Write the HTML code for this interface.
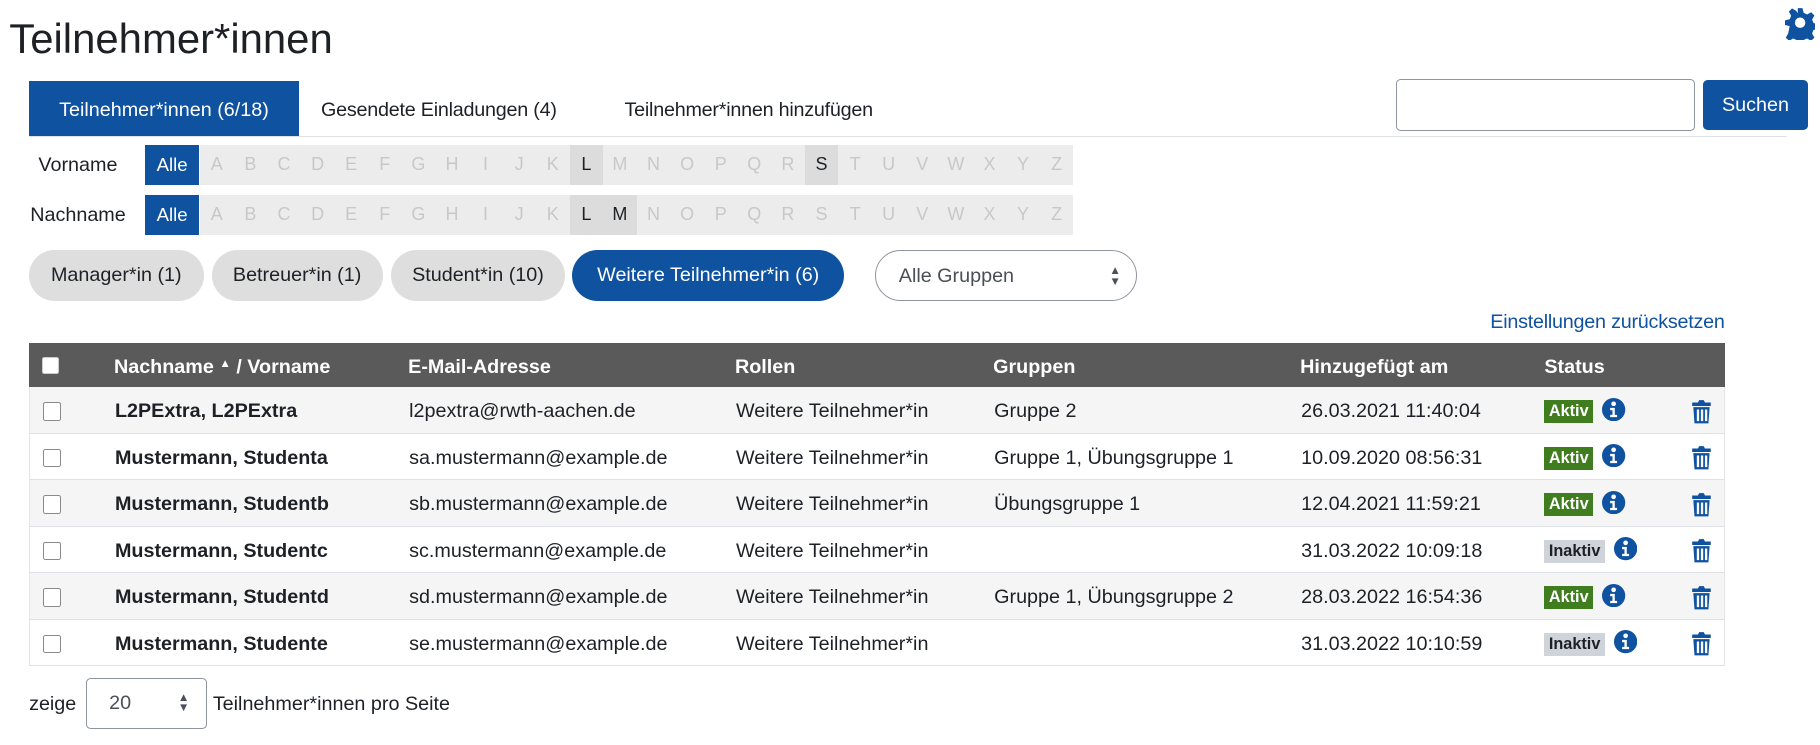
<!DOCTYPE html>
<html><head><meta charset="utf-8"><style>
html,body{margin:0;padding:0;background:#fff;overflow:hidden}
body{width:1820px;height:745px}
#w{zoom:1.16294;position:relative;width:1565px;height:641px;font-family:"Liberation Sans",sans-serif;color:#1d2125;font-size:17px}
.a{position:absolute;white-space:nowrap}
.blue{background:#0f52a0;color:#fff}
.bar{position:absolute;left:172px;width:751px;background:#ececec;display:flex}
.bar span{width:29px;text-align:center;color:#c8c8c8;font-size:15.5px;line-height:34px}
.bar span.on{background:#dcdcdc;color:#1d2125}
.pill{position:absolute;top:215px;height:44px;border-radius:22px;background:#dedede;line-height:44px;font-size:17px;text-align:center}
.pill.blue{background:#0f52a0;color:#fff}
.hdr{position:absolute;left:25px;top:295px;width:1458px;height:38px;background:#5a5a5a;color:#fff;font-weight:bold}
.row{position:absolute;left:25px;width:1458px;height:40px;border-bottom:1px solid #dee2e6;border-left:1px solid #e5e5e5;border-right:1px solid #e5e5e5;box-sizing:border-box}
.row .a,.hdr .a{top:11px}
.cb{position:absolute;left:11px;top:13px;width:14px;height:14px;border:1.5px solid #8a8a8a;border-radius:2px;background:#fff}
.badge{position:absolute;left:1302px;top:11px;height:20px;line-height:20px;padding:0 4px;font-size:14px;font-weight:bold}
.ak{background:#3f7d1f;color:#fff}
.in{background:#ced4da;color:#1d2125}
</style></head><body><div id="w">
<div class="a" style="left:8px;top:13px;font-size:36px;line-height:42px">Teilnehmer*innen</div>
<svg class="a" style="left:1535px;top:6px" width="26" height="28" viewBox="0 0 26 28"><path fill="#0f52a0" d="M11 1h4l1 4 3 1.5 3.5-2 2.8 2.8-2 3.5 1.2 3 4 1v4l-4 1-1.2 3 2 3.5-2.8 2.8-3.5-2-3 1.3-1 4h-4l-1-4-3-1.3-3.5 2-2.8-2.8 2-3.5L4 16.5l-4-1v-4l4-1 1.3-3-2-3.5L6 1.2l3.5 2L11 5.4z"/><circle cx="13" cy="13.5" r="4.5" fill="#fff"/></svg>

<div class="a blue" style="left:25px;top:70px;width:232px;height:47px;line-height:50px;text-align:center">Teilnehmer*innen (6/18)</div>
<div class="a" style="left:276px;top:70px;line-height:50px;letter-spacing:-0.2px">Gesendete Einladungen (4)</div>
<div class="a" style="left:537px;top:70px;line-height:50px;letter-spacing:-0.2px">Teilnehmer*innen hinzufügen</div>
<div class="a" style="left:25px;top:117px;width:1512px;height:1px;background:#dee2e6"></div>
<div class="a" style="left:1200px;top:68px;width:256px;height:43px;border:1px solid #8f959e;border-radius:4px"></div>
<div class="a blue" style="left:1464px;top:69px;width:91px;height:43px;border-radius:4px;line-height:43px;text-align:center">Suchen</div>

<div class="a" style="left:33px;top:125px;line-height:36px">Vorname</div>
<div class="a blue" style="left:125px;top:125px;width:46px;height:34px;line-height:34px;text-align:center;font-size:16px">Alle</div>
<div class="bar" style="top:125px;height:34px"><span>A</span><span>B</span><span>C</span><span>D</span><span>E</span><span>F</span><span>G</span><span>H</span><span>I</span><span>J</span><span>K</span><span class="on">L</span><span>M</span><span>N</span><span>O</span><span>P</span><span>Q</span><span>R</span><span class="on">S</span><span>T</span><span>U</span><span>V</span><span>W</span><span>X</span><span>Y</span><span>Z</span></div>
<div class="a" style="left:26px;top:168px;line-height:36px">Nachname</div>
<div class="a blue" style="left:125px;top:168px;width:46px;height:34px;line-height:34px;text-align:center;font-size:16px">Alle</div>
<div class="bar" style="top:168px;height:34px"><span>A</span><span>B</span><span>C</span><span>D</span><span>E</span><span>F</span><span>G</span><span>H</span><span>I</span><span>J</span><span>K</span><span class="on">L</span><span class="on">M</span><span>N</span><span>O</span><span>P</span><span>Q</span><span>R</span><span>S</span><span>T</span><span>U</span><span>V</span><span>W</span><span>X</span><span>Y</span><span>Z</span></div>

<div class="pill" style="left:25px;width:150px">Manager*in (1)</div>
<div class="pill" style="left:182px;width:147px">Betreuer*in (1)</div>
<div class="pill" style="left:336px;width:150px">Student*in (10)</div>
<div class="pill blue" style="left:492px;width:234px">Weitere Teilnehmer*in (6)</div>
<div class="a" style="left:752px;top:215px;width:224px;height:42px;border:1px solid #8f959e;border-radius:22px;line-height:44px;color:#495057"><span style="margin-left:20px">Alle Gruppen</span><span style="position:absolute;right:13px;font-size:10px;line-height:9px;top:13px">▲<br>▼</span></div>
<div class="a" style="right:82px;top:266px;color:#0f52a0;line-height:24px;letter-spacing:-0.2px">Einstellungen zurücksetzen</div>

<div class="hdr">
<div style="position:absolute;left:11px;top:12px;width:15px;height:15px;background:#fff;border-radius:2px;border:1px solid #ccc;box-sizing:border-box"></div>
<div class="a" style="left:73px">Nachname <span style="font-size:10px;vertical-align:5px">▲</span> / Vorname</div>
<div class="a" style="left:326px">E-Mail-Adresse</div>
<div class="a" style="left:607px">Rollen</div>
<div class="a" style="left:829px">Gruppen</div>
<div class="a" style="left:1093px">Hinzugefügt am</div>
<div class="a" style="left:1303px">Status</div>
</div>

<div class="row" style="top:333px;background:#f5f5f5"><div class="cb"></div><b class="a" style="left:73px">L2PExtra, L2PExtra</b><div class="a" style="left:326px">l2pextra@rwth-aachen.de</div><div class="a" style="left:607px">Weitere Teilnehmer*in</div><div class="a" style="left:829px">Gruppe 2</div><div class="a" style="left:1093px">26.03.2021 11:40:04</div><div class="badge ak">Aktiv</div><svg class="a" style="left:1352px;top:9px" width="20" height="20" viewBox="0 0 20 20"><circle cx="10" cy="10" r="10" fill="#0f52a0"/><circle cx="10" cy="5" r="2" fill="#fff"/><path d="M7 8.5h4v6h2v2H7v-2h2v-4H7z" fill="#fff"/></svg><svg class="a" style="left:1428px;top:10px" width="18" height="22" viewBox="0 0 18 22"><path fill="#0f52a0" d="M1 3h5l1-2h4l1 2h5v3H1zM2 7h14l-1 14H3zm3 2v10h2V9zm3.5 0v10h2V9zM12 9v10h2V9z"/></svg></div>
<div class="row" style="top:373px;background:#fff"><div class="cb"></div><b class="a" style="left:73px">Mustermann, Studenta</b><div class="a" style="left:326px">sa.mustermann@example.de</div><div class="a" style="left:607px">Weitere Teilnehmer*in</div><div class="a" style="left:829px">Gruppe 1, Übungsgruppe 1</div><div class="a" style="left:1093px">10.09.2020 08:56:31</div><div class="badge ak">Aktiv</div><svg class="a" style="left:1352px;top:9px" width="20" height="20" viewBox="0 0 20 20"><circle cx="10" cy="10" r="10" fill="#0f52a0"/><circle cx="10" cy="5" r="2" fill="#fff"/><path d="M7 8.5h4v6h2v2H7v-2h2v-4H7z" fill="#fff"/></svg><svg class="a" style="left:1428px;top:10px" width="18" height="22" viewBox="0 0 18 22"><path fill="#0f52a0" d="M1 3h5l1-2h4l1 2h5v3H1zM2 7h14l-1 14H3zm3 2v10h2V9zm3.5 0v10h2V9zM12 9v10h2V9z"/></svg></div>
<div class="row" style="top:413px;background:#f5f5f5"><div class="cb"></div><b class="a" style="left:73px">Mustermann, Studentb</b><div class="a" style="left:326px">sb.mustermann@example.de</div><div class="a" style="left:607px">Weitere Teilnehmer*in</div><div class="a" style="left:829px">Übungsgruppe 1</div><div class="a" style="left:1093px">12.04.2021 11:59:21</div><div class="badge ak">Aktiv</div><svg class="a" style="left:1352px;top:9px" width="20" height="20" viewBox="0 0 20 20"><circle cx="10" cy="10" r="10" fill="#0f52a0"/><circle cx="10" cy="5" r="2" fill="#fff"/><path d="M7 8.5h4v6h2v2H7v-2h2v-4H7z" fill="#fff"/></svg><svg class="a" style="left:1428px;top:10px" width="18" height="22" viewBox="0 0 18 22"><path fill="#0f52a0" d="M1 3h5l1-2h4l1 2h5v3H1zM2 7h14l-1 14H3zm3 2v10h2V9zm3.5 0v10h2V9zM12 9v10h2V9z"/></svg></div>
<div class="row" style="top:453px;background:#fff"><div class="cb"></div><b class="a" style="left:73px">Mustermann, Studentc</b><div class="a" style="left:326px">sc.mustermann@example.de</div><div class="a" style="left:607px">Weitere Teilnehmer*in</div><div class="a" style="left:1093px">31.03.2022 10:09:18</div><div class="badge in">Inaktiv</div><svg class="a" style="left:1362px;top:9px" width="20" height="20" viewBox="0 0 20 20"><circle cx="10" cy="10" r="10" fill="#0f52a0"/><circle cx="10" cy="5" r="2" fill="#fff"/><path d="M7 8.5h4v6h2v2H7v-2h2v-4H7z" fill="#fff"/></svg><svg class="a" style="left:1428px;top:10px" width="18" height="22" viewBox="0 0 18 22"><path fill="#0f52a0" d="M1 3h5l1-2h4l1 2h5v3H1zM2 7h14l-1 14H3zm3 2v10h2V9zm3.5 0v10h2V9zM12 9v10h2V9z"/></svg></div>
<div class="row" style="top:493px;background:#f5f5f5"><div class="cb"></div><b class="a" style="left:73px">Mustermann, Studentd</b><div class="a" style="left:326px">sd.mustermann@example.de</div><div class="a" style="left:607px">Weitere Teilnehmer*in</div><div class="a" style="left:829px">Gruppe 1, Übungsgruppe 2</div><div class="a" style="left:1093px">28.03.2022 16:54:36</div><div class="badge ak">Aktiv</div><svg class="a" style="left:1352px;top:9px" width="20" height="20" viewBox="0 0 20 20"><circle cx="10" cy="10" r="10" fill="#0f52a0"/><circle cx="10" cy="5" r="2" fill="#fff"/><path d="M7 8.5h4v6h2v2H7v-2h2v-4H7z" fill="#fff"/></svg><svg class="a" style="left:1428px;top:10px" width="18" height="22" viewBox="0 0 18 22"><path fill="#0f52a0" d="M1 3h5l1-2h4l1 2h5v3H1zM2 7h14l-1 14H3zm3 2v10h2V9zm3.5 0v10h2V9zM12 9v10h2V9z"/></svg></div>
<div class="row" style="top:533px;background:#fff"><div class="cb"></div><b class="a" style="left:73px">Mustermann, Studente</b><div class="a" style="left:326px">se.mustermann@example.de</div><div class="a" style="left:607px">Weitere Teilnehmer*in</div><div class="a" style="left:1093px">31.03.2022 10:10:59</div><div class="badge in">Inaktiv</div><svg class="a" style="left:1362px;top:9px" width="20" height="20" viewBox="0 0 20 20"><circle cx="10" cy="10" r="10" fill="#0f52a0"/><circle cx="10" cy="5" r="2" fill="#fff"/><path d="M7 8.5h4v6h2v2H7v-2h2v-4H7z" fill="#fff"/></svg><svg class="a" style="left:1428px;top:10px" width="18" height="22" viewBox="0 0 18 22"><path fill="#0f52a0" d="M1 3h5l1-2h4l1 2h5v3H1zM2 7h14l-1 14H3zm3 2v10h2V9zm3.5 0v10h2V9zM12 9v10h2V9z"/></svg></div>

<div class="a" style="left:25px;top:594px;line-height:24px">zeige</div>
<div class="a" style="left:74px;top:583px;width:102px;height:42px;border:1px solid #8f959e;border-radius:4px;line-height:42px;color:#495057"><span style="margin-left:19px">20</span><span style="position:absolute;right:14px;top:12px;font-size:10px;line-height:9px">▲<br>▼</span></div>
<div class="a" style="left:183px;top:594px;line-height:24px">Teilnehmer*innen pro Seite</div>
</div></body></html>
